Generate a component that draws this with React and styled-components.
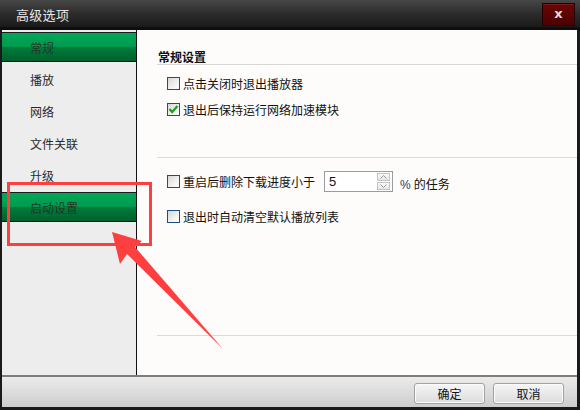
import React from "react";
import styled, { createGlobalStyle, css } from "styled-components";

const Global = createGlobalStyle`
  html, body { margin: 0; padding: 0; background: #1c1c1c; }
  body { font-family: "Noto Sans CJK SC", "Noto Sans", sans-serif; font-size: 12px; }
  * { box-sizing: border-box; }
`;

const Window = styled.div`
  position: relative;
  width: 580px;
  height: 410px;
  background: #1a1a1a;
  display: flex;
  flex-direction: column;
  overflow: hidden;
`;

const TitleBar = styled.div`
  height: 30px;
  display: flex;
  justify-content: space-between;
  align-items: flex-start;
  padding: 0 5px 0 16px;
  background: linear-gradient(#474747 0%, #2c2c2c 45%, #1a1a1a 90%, #0e0e0e 90%, #0e0e0e 100%);
`;

const Title = styled.div`
  color: #e6e6e6;
  font-size: 13px;
  line-height: 16px;
  margin-top: 7px;
  letter-spacing: 0.3px;
`;

const CloseButton = styled.div`
  margin-top: 3px;
  width: 33px;
  height: 23px;
  border: 1px solid #220000;
  background: linear-gradient(#6a0606, #4e0000);
  box-shadow: inset 0 1px 0 #7a1a1a;
  color: #dcdcdc;
  font-family: "DejaVu Sans", sans-serif;
  font-weight: bold;
  font-size: 13px;
  line-height: 20px;
  text-align: center;
`;

const Main = styled.div`
  height: 345px;
  margin: 0 3px 0 2px;
  display: flex;
`;

const Sidebar = styled.div`
  width: 135px;
  background: #ededed;
  border-right: 1px solid #111;
  padding-top: 2px;
  display: flex;
  flex-direction: column;
  gap: 2px;
`;

const NavItem = styled.div`
  height: 30px;
  padding-left: 28px;
  display: flex;
  align-items: center;
  color: #2a2a2a;
  font-size: 12px;
  ${(p) =>
    p.$active &&
    css`
      color: #1d3a24;
      border-top: 1px solid #1a1a1a;
      border-bottom: 1px solid #111;
      background: linear-gradient(#00a85a 0%, #009a4e 48%, #007c3c 52%, #00602c 100%);
    `}
`;

const Content = styled.div`
  flex: 1;
  background: #fdfcfa;
  padding: 20px 0 0 20px;
  display: flex;
  flex-direction: column;
`;

const Heading = styled.div`
  font-weight: bold;
  font-size: 12px;
  line-height: 14px;
  color: #111;
  padding-left: 1px;
  border-bottom: 1px solid #d8d8d8;
  margin-bottom: 5px;
`;

const Row = styled.div`
  height: ${(p) => p.$h || 26}px;
  display: flex;
  align-items: center;
  padding-left: 10px;
  color: #111;
  margin-top: ${(p) => p.$mt || 0}px;
`;

const Box = styled.span`
  width: 13px;
  height: 13px;
  border: 1px solid #1c5080;
  background: linear-gradient(135deg, #d6d6d4 0%, #f2f2f0 60%, #ffffff 100%);
  margin-right: 3px;
  display: flex;
  align-items: center;
  justify-content: center;
  flex-shrink: 0;
`;

const Separator = styled.div`
  height: 1px;
  background: #dadada;
  margin-top: ${(p) => p.$mt || 0}px;
`;

const SpinBox = styled.div`
  margin-left: 9px;
  width: 69px;
  height: 21px;
  border: 1px solid #9c9c9c;
  background: #fff;
  display: flex;
  align-items: center;
  padding-left: 4px;
`;

const SpinValue = styled.span`
  flex: 1;
  font-family: "Liberation Sans", Arial, sans-serif;
  font-size: 13px;
  color: #111;
`;

const SpinButtons = styled.div`
  width: 13px;
  height: 17px;
  margin-right: 2px;
  display: flex;
  flex-direction: column;
  gap: 1px;
`;

const SpinBtn = styled.div`
  flex: 1;
  border: 1px solid #c4c4c4;
  background: linear-gradient(#fafafa, #e6e6e6);
  display: flex;
  align-items: center;
  justify-content: center;
`;

const Suffix = styled.span`
  margin-left: 7px;
  margin-top: 4px;
  color: #111;
`;

const Percent = styled.span`
  color: #1a3d6e;
  font-family: "Liberation Sans", Arial, sans-serif;
  margin-right: 3px;
`;

const Footer = styled.div`
  height: 32px;
  margin: 0 3px 0 2px;
  border-top: 2px solid #7d7d7d;
  background: linear-gradient(#ebebeb, #cdcdcd);
  display: flex;
  justify-content: flex-end;
  align-items: flex-start;
  gap: 8px;
  padding: 6px 13px 0 0;
`;

const Button = styled.div`
  width: 71px;
  height: 21px;
  border: 1px solid #a2a2a2;
  border-radius: 3px;
  background: linear-gradient(#f6f6f6, #dcdcdc);
  box-shadow: inset 0 0 0 1px #fbfbfb;
  display: flex;
  align-items: center;
  justify-content: center;
  color: #111;
  font-size: 12px;
`;

const Highlight = styled.div`
  position: absolute;
  left: 7px;
  top: 182px;
  width: 145px;
  height: 64px;
  border: 3px solid #fd3f3f;
  pointer-events: none;
`;

const ArrowLayer = styled.svg`
  position: absolute;
  left: 0;
  top: 0;
  pointer-events: none;
`;

const Check = () => (
  <svg width="11" height="11" viewBox="0 0 11 11">
    <path d="M1.5 5 L4.2 8 L9.5 2" fill="none" stroke="#1f9e2a" strokeWidth="2.2" />
  </svg>
);

const Up = () => (
  <svg width="7" height="4" viewBox="0 0 7 4">
    <path d="M0.5 3.5 L3.5 0.5 L6.5 3.5" fill="none" stroke="#9a9a9a" strokeWidth="1" />
  </svg>
);
const Down = () => (
  <svg width="7" height="4" viewBox="0 0 7 4">
    <path d="M0.5 0.5 L3.5 3.5 L6.5 0.5" fill="none" stroke="#9a9a9a" strokeWidth="1" />
  </svg>
);

const navItems = ["常规", "播放", "网络", "文件关联", "升级", "启动设置"];
const activeSet = new Set(["常规", "启动设置"]);

export default function App() {
  return (
    <>
      <Global />
      <Window>
        <TitleBar>
          <Title>高级选项</Title>
          <CloseButton>x</CloseButton>
        </TitleBar>
        <Main>
          <Sidebar>
            {navItems.map((t) => (
              <NavItem key={t} $active={activeSet.has(t)}>
                {t}
              </NavItem>
            ))}
          </Sidebar>
          <Content>
            <Heading>常规设置</Heading>
            <Row>
              <Box />
              点击关闭时退出播放器
            </Row>
            <Row>
              <Box>
                <Check />
              </Box>
              退出后保持运行网络加速模块
            </Row>
            <Separator $mt={35} />
            <Row $mt={10} $h={27}>
              <Box />
              重启后删除下载进度小于
              <SpinBox>
                <SpinValue>5</SpinValue>
                <SpinButtons>
                  <SpinBtn>
                    <Up />
                  </SpinBtn>
                  <SpinBtn>
                    <Down />
                  </SpinBtn>
                </SpinButtons>
              </SpinBox>
              <Suffix>
                <Percent>%</Percent>的任务
              </Suffix>
            </Row>
            <Row $mt={8}>
              <Box />
              退出时自动清空默认播放列表
            </Row>
            <Separator $mt={106} />
          </Content>
        </Main>
        <Footer>
          <Button>确定</Button>
          <Button>取消</Button>
        </Footer>
        <Highlight />
        <ArrowLayer width="580" height="410" viewBox="0 0 580 410">
          <polygon
            points="112,232 142,241 135,247 223,349 127,254 120,264"
            fill="#fd3f3f"
          />
        </ArrowLayer>
      </Window>
    </>
  );
}
